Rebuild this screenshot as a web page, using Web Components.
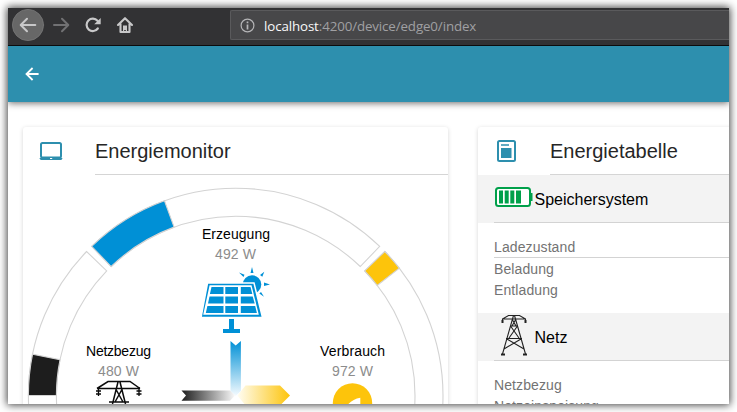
<!DOCTYPE html>
<html lang="de"><head><meta charset="utf-8"><title>Energiemonitor</title>
<style>html,body{margin:0;background:#fff;overflow:hidden}body{width:737px;height:412px;font-family:"Liberation Sans",Arial,sans-serif}</style></head>
<body><app-window></app-window>
<script>
const define = (name, html) => {
  const t = document.createElement('template');
  t.innerHTML = html;
  customElements.define(name, class extends HTMLElement {
    constructor() { super(); this.attachShadow({mode: 'open'}).append(t.content.cloneNode(true)); }
  });
};

define('browser-bar', `<style>
:host{display:flex;height:38px;box-sizing:border-box;background:#323234;border-bottom:1px solid #0c0c0d;overflow:hidden}
.nav{width:222px;height:36px;flex:none;display:block}
.url{flex:1;height:30px;box-sizing:border-box;margin-top:2px;background:#474749;border:1px solid #5a5a5c;border-right:0;border-radius:2px 0 0 2px;display:flex;align-items:center;padding-left:9px;gap:9px;font:13.33px "Open Sans","Noto Sans",sans-serif;color:#a0a0a3;white-space:nowrap}
.url svg{flex:none}.url span{display:block;letter-spacing:-.12px;padding-top:2px}b{font-weight:400;color:#f9f9fa}
</style>
<svg class="nav" viewBox="8 8 222 36" fill="none" stroke="#c8c8c9" stroke-width="2" stroke-linecap="round" stroke-linejoin="round">
<circle cx="28" cy="25" r="15.6" fill="#676767" stroke="#777" stroke-width=".8"/>
<path d="M35.3 25H21M27 18.7L20.7 25l6.3 6.3"/>
<path d="M54 25h14M62 18.7l6.3 6.3-6.3 6.3" stroke="#717173"/>
<path d="M97.8 28.5A6.2 6.2 0 1 1 97.5 20.8" stroke-width="2.2"/><path d="M100.700 18v6.300h-6.500z" fill="#c8c8c9" stroke="none"/>
<path d="M118 25l7-6.800 7 6.800M120.500 24v8h9v-8" stroke-width="2.100"/><path d="M123 32v-6.500h4V32h-1.200v-2h-1.600v2z" fill="#c8c8c9" stroke="none"/>
</svg>
<div class="url"><svg width="15" height="15" viewBox="0 0 15 15"><circle cx="7.500" cy="7.500" r="6.400" fill="none" stroke="#b5b5b7" stroke-width="1.200"/><path d="M7.500 6.500v5M7.500 3.500v1.700" stroke="#b5b5b7" stroke-width="1.700"/></svg><span><b>localhost</b>:4200/device/edge0/index</span></div>`);

define('app-toolbar', `<style>:host{display:flex;align-items:center;height:56px;background:#2d8fae;padding-left:16px;box-shadow:0 1px 7px rgba(0,0,0,.6);clip-path:inset(0 0 -10px 0);position:relative}svg{display:block}</style>
<svg width="16" height="16" viewBox="0 0 16 16" fill="none" stroke="#fff" stroke-width="1.800"><path d="M14.600 8H2.800M8.600 2L2.500 8l6.100 6"/></svg>`);

define('info-card', `<style>:host{display:block;background:#fff;border-radius:3px;box-shadow:0 1px 4px rgba(0,0,0,.17);box-sizing:border-box;overflow:hidden}
header{display:flex;height:48px;box-sizing:border-box}
.icon{width:72px;flex:none;padding:11px 0 0 16px;box-sizing:border-box}
h2{flex:1;margin:0;border-bottom:1px solid #d5d5d5;font-size:20px;line-height:48px;font-weight:400;color:#262626;white-space:nowrap;height:47px}
</style><header><div class="icon"><slot name="icon"></slot></div><h2><slot name="title"></slot></h2></header><slot></slot>`);

define('laptop-icon', `<style>:host,svg{display:block}</style><svg width="24" height="24" viewBox="39 138 24 24"><rect x="41" y="143" width="20" height="14.500" rx="1.500" fill="none" stroke="#2d8fae" stroke-width="2"/><path d="M39.300 158h23.300l-1.200 2H40.700z" fill="#2d8fae"/><path d="M50 158.500h2.200" stroke="#fff"/></svg>`);
define('book-icon', `<style>:host,svg{display:block}</style><svg width="24" height="24" viewBox="494 138 24 24"><rect x="498" y="141" width="17" height="20" rx="1.500" fill="#fff" stroke="#2d8fae" stroke-width="2"/><path d="M501 145h8" stroke="#2d8fae" stroke-width="1.400"/><path d="M501 148h10.500v10H501z" fill="#2d8fae"/></svg>`);

/* Ring sectors, angles in degrees clockwise from the top. */
const cx = 235.7, cy = 395.5, ro = 207.3, ri = 179.3;
const pt = (r, a) => { a *= Math.PI / 180; return (cx + r * Math.sin(a)).toFixed(2) + ' ' + (cy - r * Math.cos(a)).toFixed(2); };
const sector = (a, b, fill) => `<path fill="${fill}" d="M${pt(ro, a)}A${ro} ${ro} 0 0 1 ${pt(ro, b)}L${pt(ri, b)}A${ri} ${ri} 0 0 0 ${pt(ri, a)}Z"/>`;
const arcs = sector(-44, 44, '#fff') + sector(-44, -20.1, '#0090d6') + sector(46, 134, '#fff') + sector(46, 52.1, '#fdc40b') + sector(-134, -46, '#fff') + sector(-90, -78.5, '#1d1d1d');

define('energy-monitor', `<style>:host,svg{display:block}svg{font-family:"Liberation Sans",Arial,sans-serif}</style>
<svg width="425" height="229" viewBox="23 175 425 229">
<defs>
<linearGradient id="b" x2="0" y2="1"><stop stop-color="#0090d6"/><stop offset="1" stop-color="#f5fbff"/></linearGradient>
<linearGradient id="k"><stop stop-color="#1d1d1d"/><stop offset="1" stop-color="#fafafa"/></linearGradient>
<linearGradient id="y"><stop stop-color="#fffdf2"/><stop offset="1" stop-color="#fdc40b"/></linearGradient>
</defs>
<g stroke="#d3d3d3" stroke-width="1.100">${arcs}</g>
<g font-size="14" text-anchor="middle">
<g fill="#000"><text x="236" y="239" textLength="68">Erzeugung</text><text x="118.500" y="356" textLength="65">Netzbezug</text><text x="352.500" y="356" textLength="65">Verbrauch</text></g>
<g fill="#8c8c8c"><text x="235.500" y="259" textLength="41">492 W</text><text x="118.500" y="376" textLength="41">480 W</text><text x="352.500" y="376" textLength="41">972 W</text></g></g>
<g fill="#0090d6">
<circle cx="252" cy="284.500" r="9.300"/>
<path d="M250.500 273l1.500-6 1.500 6zM260 275l4.300-3.200-2 5zM264 282.500l6 1.900-6 1.700zM261 292l3 4.800-4.700-3.200zM243.500 276.900l-4.500-4.500 5.500 2.300z"/>
<path d="M207.500 283h46.500l8.500 34.500h-61.500z" stroke="#fff" stroke-width="1.500"/>
<path d="M209.600 285.300h41.900l7.300 29.400h-55.600z" fill="#fff"/>
<path d="M211.500 287h12v7h-13.600zM225.300 287h12.700v7h-12.700zM240.800 287h9.700l1.800 7H240.800zM209.500 296.500h14v7h-15.500zM225.300 296.500h12.700v7h-12.700zM240.800 296.500h11.900l2 7H240.800zM207.400 306h16.100v7h-17.700zM225.300 306h12.700v7h-12.700zM240.800 306h14.400l1.700 7H240.800z"/>
<path d="M229 319h5v10h6v4h-17v-4h6z"/>
</g>
<path d="M230.500 341l5.200 4.500 5.200-4.500v50l-5.200 5-5.200-5z" fill="url(#b)"/>
<path d="M181.500 390.500H230l5 5-5 5.200h-48.500l4.500-5.200z" fill="url(#k)"/>
<path d="M237.500 395.500l8-10H280l10 10-10 10h-34.500z" fill="url(#y)"/>
<circle cx="352.500" cy="403" r="19.700" fill="#fdc40b"/><path d="M347.500 405q5-6 12.800-7.300v8z" fill="#fff"/>
<g fill="none" stroke="#0b0b0b" stroke-width="1.500"><path d="M97 388.500l11-7h22l10 7M97 388.500h43M118 382l-5.500 22M120 382l5.500 22M115.500 388.500l7.500 13.500M122.500 388.500l-7.500 13.500M109 402h20"/><path d="M98.500 387v9M139 387v9M96 391h5M96 394h5M136.500 391h5M136.500 394h5" stroke-width="1.300"/></g>
</svg>`);

define('section-head', `<style>:host{display:flex;height:48px;background:#f3f3f3;padding-left:16px;box-sizing:border-box}
div{flex:1;display:flex;align-items:center;border-bottom:1px solid #d3d3d3;height:47px;font-size:16px;color:#000}
span{padding:2px 0 0 .5px}
::slotted(svg){display:block;width:40px;height:48px;flex:none}</style><div><slot name="icon"></slot><span><slot></slot></span></div>`);
define('data-row', `<style>:host{display:block;margin-left:16px;height:21px;box-sizing:border-box;font-size:14px;line-height:23px;color:#737373;white-space:nowrap}:host([lined]){border-bottom:1px solid #d3d3d3;height:22px;line-height:22px}span{letter-spacing:.1px}</style><span><slot></slot></span>`);

define('energy-table', `<style>:host{display:block}.rows{height:90px;padding-top:13px;box-sizing:border-box}</style>
<section-head><svg slot="icon" viewBox="494 175 40 48"><rect x="496" y="188" width="34" height="18" rx="2.500" fill="#fff" stroke="#00a04a" stroke-width="2"/><path d="M499 190.500h4v13h-4zM504.700 190.500h4v13h-4zM510.300 190.500h4v13h-4zM516 190.500h5v13h-5z" fill="#00a04a"/><path d="M530.500 193h2v8h-2z" fill="#00a04a"/></svg>Speichersystem</section-head>
<div class="rows"><data-row lined>Ladezustand</data-row><data-row>Beladung</data-row><data-row>Entladung</data-row></div>
<section-head><svg slot="icon" viewBox="494 313 40 48" fill="none" stroke="#222" stroke-width="1.100"><path d="M502.500 319l6-3.500h11l6 3.500M502.500 319h23M502.500 318.500v4M525.500 318.500v4M513.500 315.500l-11 38.500M514.500 315.500l11 38.500M511 326h6M510.500 326l8.500 12M517.500 326l-8.500 12M506 338.500h16M507 339l17 10M521 339l-17 10M512 319l4 7M516 319l-4 7"/><path d="M502.500 320v3M525.500 320v3M501 354.500h4M523 354.500h4" stroke-width="2"/></svg>Netz</section-head>
<div class="rows"><data-row>Netzbezug</data-row><data-row>Netzeinspeisung</data-row></div>`);

define('app-window', `<style>
:host{display:block;padding:8px;width:737px;height:412px;box-sizing:border-box}
.frame{width:721px;height:396px;box-shadow:0 0 8px 1px rgba(0,0,0,.75)}
.view{height:396px;background:#fff;overflow:hidden}
main{display:grid;grid-template-columns:425px 425px;gap:30px;padding:25px 0 0 15px}
info-card{height:340px}
</style><div class="frame"><div class="view"><browser-bar></browser-bar><app-toolbar></app-toolbar><main>
<info-card><laptop-icon slot="icon"></laptop-icon><span slot="title">Energiemonitor</span><energy-monitor></energy-monitor></info-card>
<info-card><book-icon slot="icon"></book-icon><span slot="title">Energietabelle</span><energy-table></energy-table></info-card>
</main></div></div>`);
</script></body></html>
